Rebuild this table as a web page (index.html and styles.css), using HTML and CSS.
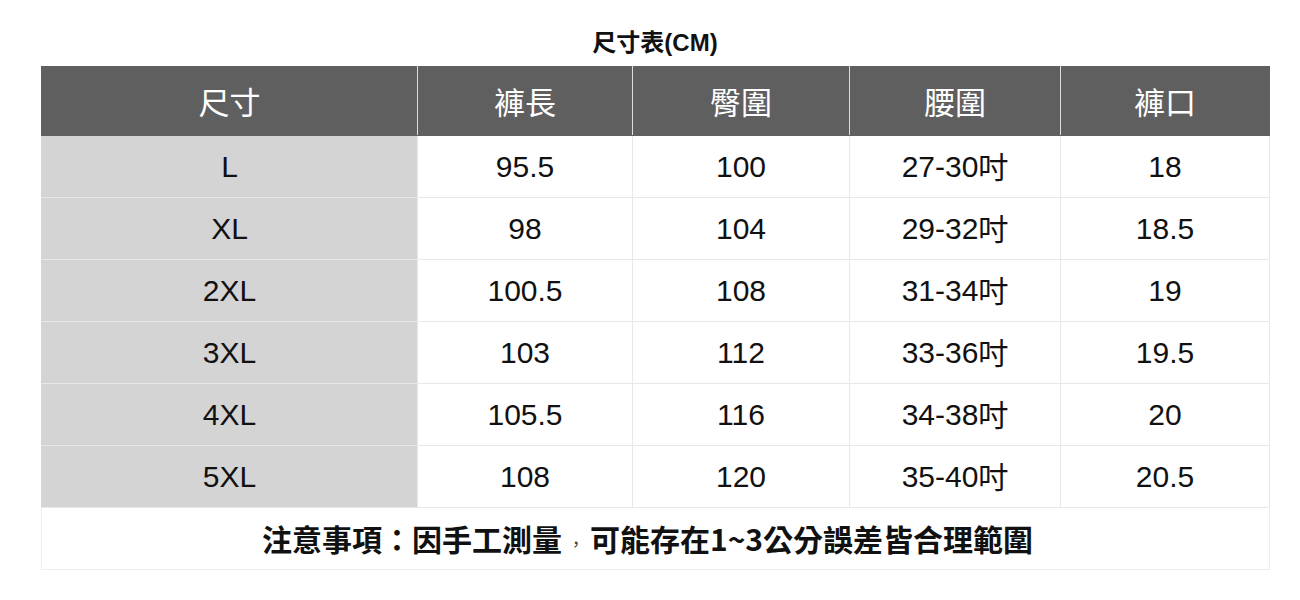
FILE: index.html
```html
<!DOCTYPE html>
<html lang="zh-Hant">
<head>
<meta charset="utf-8">
<link rel="stylesheet" href="styles.css">
</head>
<body>
<div class="page">
  <div class="title">尺寸表(CM)</div>
  <table class="size-table">
    <thead>
      <tr>
        <th class="c1">尺寸</th>
        <th class="c2">褲長</th>
        <th class="c3">臀圍</th>
        <th class="c4">腰圍</th>
        <th class="c5">褲口</th>
      </tr>
    </thead>
    <tbody>
      <tr><td class="size">L</td><td>95.5</td><td>100</td><td>27-30<span class="unit">吋</span></td><td>18</td></tr>
      <tr><td class="size">XL</td><td>98</td><td>104</td><td>29-32<span class="unit">吋</span></td><td>18.5</td></tr>
      <tr><td class="size">2XL</td><td>100.5</td><td>108</td><td>31-34<span class="unit">吋</span></td><td>19</td></tr>
      <tr><td class="size">3XL</td><td>103</td><td>112</td><td>33-36<span class="unit">吋</span></td><td>19.5</td></tr>
      <tr><td class="size">4XL</td><td>105.5</td><td>116</td><td>34-38<span class="unit">吋</span></td><td>20</td></tr>
      <tr><td class="size">5XL</td><td>108</td><td>120</td><td>35-40<span class="unit">吋</span></td><td>20.5</td></tr>
      <tr class="note"><td colspan="5">注意事項：因手工測量<span class="comma">，</span>可能存在1~3公分誤差皆合理範圍</td></tr>
    </tbody>
  </table>
</div>
</body>
</html>
```
FILE: styles.css
```css
html, body {
  margin: 0;
  padding: 0;
  background: #ffffff;
}
body {
  font-family: "Liberation Sans", Arial, "Noto Sans CJK TC", sans-serif;
  color: #111;
}
.page {
  padding: 0 31px 0 41px;
}
.title {
  width: 1228px;
  height: 66px;
  line-height: 86px;
  font-size: 24px;
  font-weight: bold;
  text-align: center;
}
.size-table {
  width: 1228px;
  border-collapse: collapse;
  table-layout: fixed;
}
.size-table th,
.size-table td {
  text-align: center;
  font-size: 30px;
  line-height: 34px;
  padding: 0;
  border: 1px solid #e8e8e8;
}
.size-table th {
  background: #5f5f5f;
  color: #ffffff;
  font-weight: normal;
  height: 68px;
  border-color: #5f5f5f;
  border-left-color: #dcdcdc;
  border-right-color: #dcdcdc;
  font-family: "Noto Sans CJK TC", sans-serif;
  font-size: 31px;
}
.size-table th.c1 { width: 375px; border-left-color: #5f5f5f; }
.size-table th.c2 { width: 214px; }
.size-table th.c3 { width: 216px; }
.size-table th.c4 { width: 210px; }
.size-table th.c5 { width: 208px; border-right-color: #5f5f5f; }
.size-table td {
  height: 61px;
  color: #111;
}
.size-table td.size {
  background: #d4d4d4;
  border-left-color: #d4d4d4;
}
.unit {
  font-family: "Noto Sans CJK TC", sans-serif;
  line-height: 1;
  position: relative;
  top: 1px;
}
.size-table tr.note td {
  height: 62px;
  padding: 4px 16px 0 0;
  box-sizing: border-box;
  font-weight: bold;
  font-size: 30px;
  font-family: "Noto Sans CJK TC", "Liberation Sans", sans-serif;
  border-left-color: #eeeeee;
  border-right-color: #eeeeee;
  border-bottom-color: #eeeeee;
}
.comma {
  display: inline-block;
  width: 28px;
  text-align: center;
  font-weight: normal;
  font-size: 18px;
  color: #444;
}
```
